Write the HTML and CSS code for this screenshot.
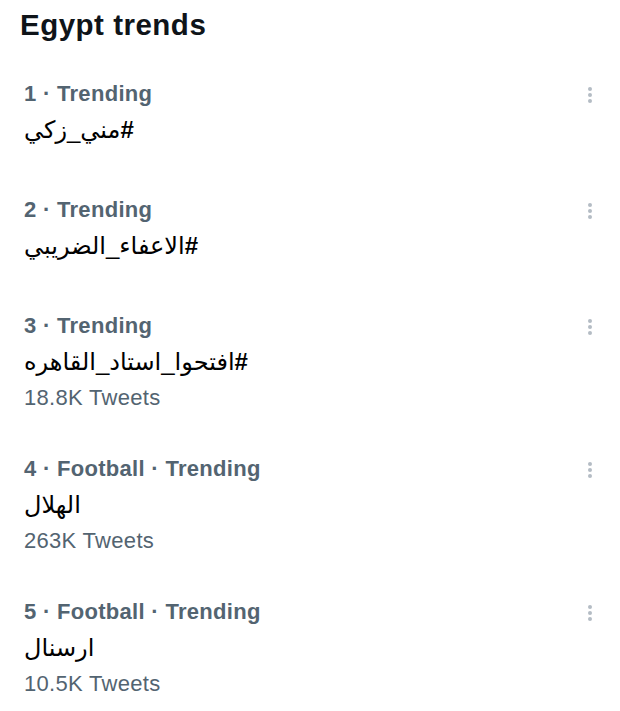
FILE: index.html
```html
<!DOCTYPE html>
<html lang="en">
<head>
    <meta charset="UTF-8">
    <meta name="viewport" content="width=device-width, initial-scale=1.0">
    <title>Egypt trends</title>
    <link rel="stylesheet" href="styles.css">
</head>
<body>

    <div class="trends">
        <h1>Egypt trends</h1>

        <div class="trend">
            <div class="trend-info">
                <p class="meta">1 · Trending</p>
                <p class="topic"><span dir="rtl"><b>#</b>مني_زكي</span></p>
            </div>
            <div class="more"><span></span><span></span><span></span></div>
        </div>

        <div class="trend">
            <div class="trend-info">
                <p class="meta">2 · Trending</p>
                <p class="topic"><span dir="rtl"><b>#</b>الاعفاء_الضريبي</span></p>
            </div>
            <div class="more"><span></span><span></span><span></span></div>
        </div>

        <div class="trend">
            <div class="trend-info">
                <p class="meta">3 · Trending</p>
                <p class="topic"><span dir="rtl"><b>#</b>افتحوا_استاد_القاهره</span></p>
                <p class="count">18.8K Tweets</p>
            </div>
            <div class="more"><span></span><span></span><span></span></div>
        </div>

        <div class="trend">
            <div class="trend-info">
                <p class="meta">4 · Football · Trending</p>
                <p class="topic"><span dir="rtl">الهلال</span></p>
                <p class="count">263K Tweets</p>
            </div>
            <div class="more"><span></span><span></span><span></span></div>
        </div>

        <div class="trend">
            <div class="trend-info">
                <p class="meta">5 · Football · Trending</p>
                <p class="topic"><span dir="rtl">ارسنال</span></p>
                <p class="count">10.5K Tweets</p>
            </div>
            <div class="more"><span></span><span></span><span></span></div>
        </div>
    </div>

</body>
</html>
```

FILE: styles.css
```css
body {
    margin: 0;
    padding: 0;
    background-color: #fff;
    color: #0f1419;
    font-family: "Liberation Sans", "DejaVu Sans", sans-serif;
}

.trends {
    padding: 7px 0 0 0;
}

h1 {
    margin: 0;
    padding: 0 20px;
    font-size: 29.5px;
    line-height: 36px;
    font-weight: bold;
    letter-spacing: 0.5px;
}

.trend {
    display: flex;
    justify-content: space-between;
    align-items: flex-start;
    padding: 44px 28px 0 24px;
}

.trend:first-of-type {
    padding-top: 37px;
}

.trend-info p {
    margin: 0;
}

.meta {
    font-size: 22px;
    line-height: 28px;
    font-weight: bold;
    color: #536471;
    letter-spacing: 0.3px;
}

.topic {
    font-size: 24px;
    line-height: 44px;
    font-weight: normal;
    color: #000;
}

.count {
    font-size: 22px;
    line-height: 27px;
    color: #536471;
    letter-spacing: 0.3px;
}

.more {
    display: flex;
    flex-direction: column;
    gap: 2px;
    padding-top: 7px;
}

.more span {
    width: 4px;
    height: 4px;
    border-radius: 50%;
    background-color: #b4bcc4;
}
```
